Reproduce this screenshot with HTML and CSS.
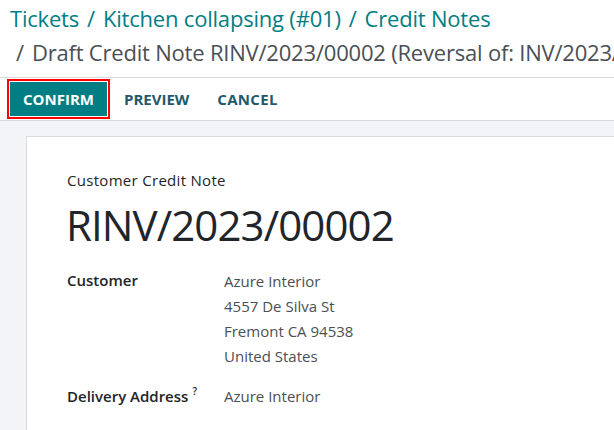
FILE: index.html
```html
<!DOCTYPE html>
<html>
<head>
<meta charset="utf-8">
<link rel="stylesheet" href="styles.css">
</head>
<body>
<div class="topbar">
  <div class="crumbs">
    <a class="crumb">Tickets</a><span class="sep">/</span><a class="crumb">Kitchen collapsing (#01)</a><span class="sep">/</span><a class="crumb">Credit Notes</a>
  </div>
  <div class="crumb-current"><span class="sep first">/</span>Draft Credit Note RINV/2023/00002 (Reversal of: INV/2023/00003)</div>
</div>
<div class="actions">
  <button class="btn btn-primary">Confirm</button>
  <button class="btn btn-link">Preview</button>
  <button class="btn btn-link">Cancel</button>
</div>
<div class="content">
  <div class="sheet">
    <div class="doc-type">Customer Credit Note</div>
    <h1 class="doc-name">RINV/2023/00002</h1>
    <div class="fields">
      <div class="label">Customer</div>
      <div class="value">
        <div>Azure Interior</div>
        <div>4557 De Silva St</div>
        <div>Fremont CA 94538</div>
        <div>United States</div>
      </div>
      <div class="label label-2">Delivery Address<sup class="help">?</sup></div>
      <div class="value value-2">Azure Interior</div>
    </div>
  </div>
</div>
</body>
</html>
```
FILE: styles.css
```css
* { box-sizing: border-box; }
html, body { margin: 0; padding: 0; }
body {
  font-family: "Open Sans", "Noto Sans", sans-serif;
  color: #212529;
  background: #fff;
  width: 614px;
  height: 430px;
  overflow: hidden;
}
.topbar {
  padding: 1px 0 0 10px;
  border-bottom: 1px solid #d8dadd;
  height: 78px;
  white-space: nowrap;
  overflow: hidden;
}
.crumbs, .crumb-current {
  font-size: 22px;
  line-height: 34px;
  letter-spacing: -0.2px;
}
.crumb { color: #017e84; }
.sep { color: #017e84; margin: 0 8px; }
.crumb-current { color: #4a4f55; }
.crumb-current .sep { color: #4a4f55; margin: 0 8px 0 6px; }
.actions {
  display: flex;
  align-items: center;
  height: 43px;
  padding-left: 10px;
  border-bottom: 1px solid #d8dadd;
}
.btn {
  font-family: inherit;
  font-size: 15px;
  font-weight: 700;
  text-transform: uppercase;
  border: 0;
  height: 34px;
  padding: 0 14px;
  background: none;
}
.btn-primary {
  background: #017e84;
  color: #fff;
  width: 97px;
  padding: 0;
  outline: 2px solid #ff0000;
  outline-offset: 1px;
  margin-right: 3px;
}
.btn-link { color: #1f5a6c; }
.btn-link:last-child { letter-spacing: 0.3px; }
.content {
  background: #f3f4f7;
  padding: 15px 0 0 26px;
  height: 310px;
}
.sheet {
  background: #fff;
  border: 1px solid #d8dadd;
  border-right: 0;
  height: 100%;
  padding: 33px 0 0 40px;
}
.doc-type {
  font-size: 15px;
  font-weight: 500;
  line-height: 20px;
  letter-spacing: 0.3px;
}
.doc-name {
  font-size: 42px;
  font-weight: 400;
  line-height: 56px;
  margin: 7px 0 0 -1px;
  letter-spacing: -0.9px;
}
.fields {
  display: grid;
  grid-template-columns: 157px 1fr;
  margin-top: 15px;
  font-size: 15px;
}
.label {
  font-weight: 600;
  line-height: 24px;
}
.value {
  color: #4a4f55;
  line-height: 25px;
}
.value > div:first-child { margin-top: 1px; }
.label-2, .value-2 { margin-top: 15px; }
.help {
  font-size: 10px;
  margin-left: 4px;
  vertical-align: top;
  line-height: 14px;
}
```
